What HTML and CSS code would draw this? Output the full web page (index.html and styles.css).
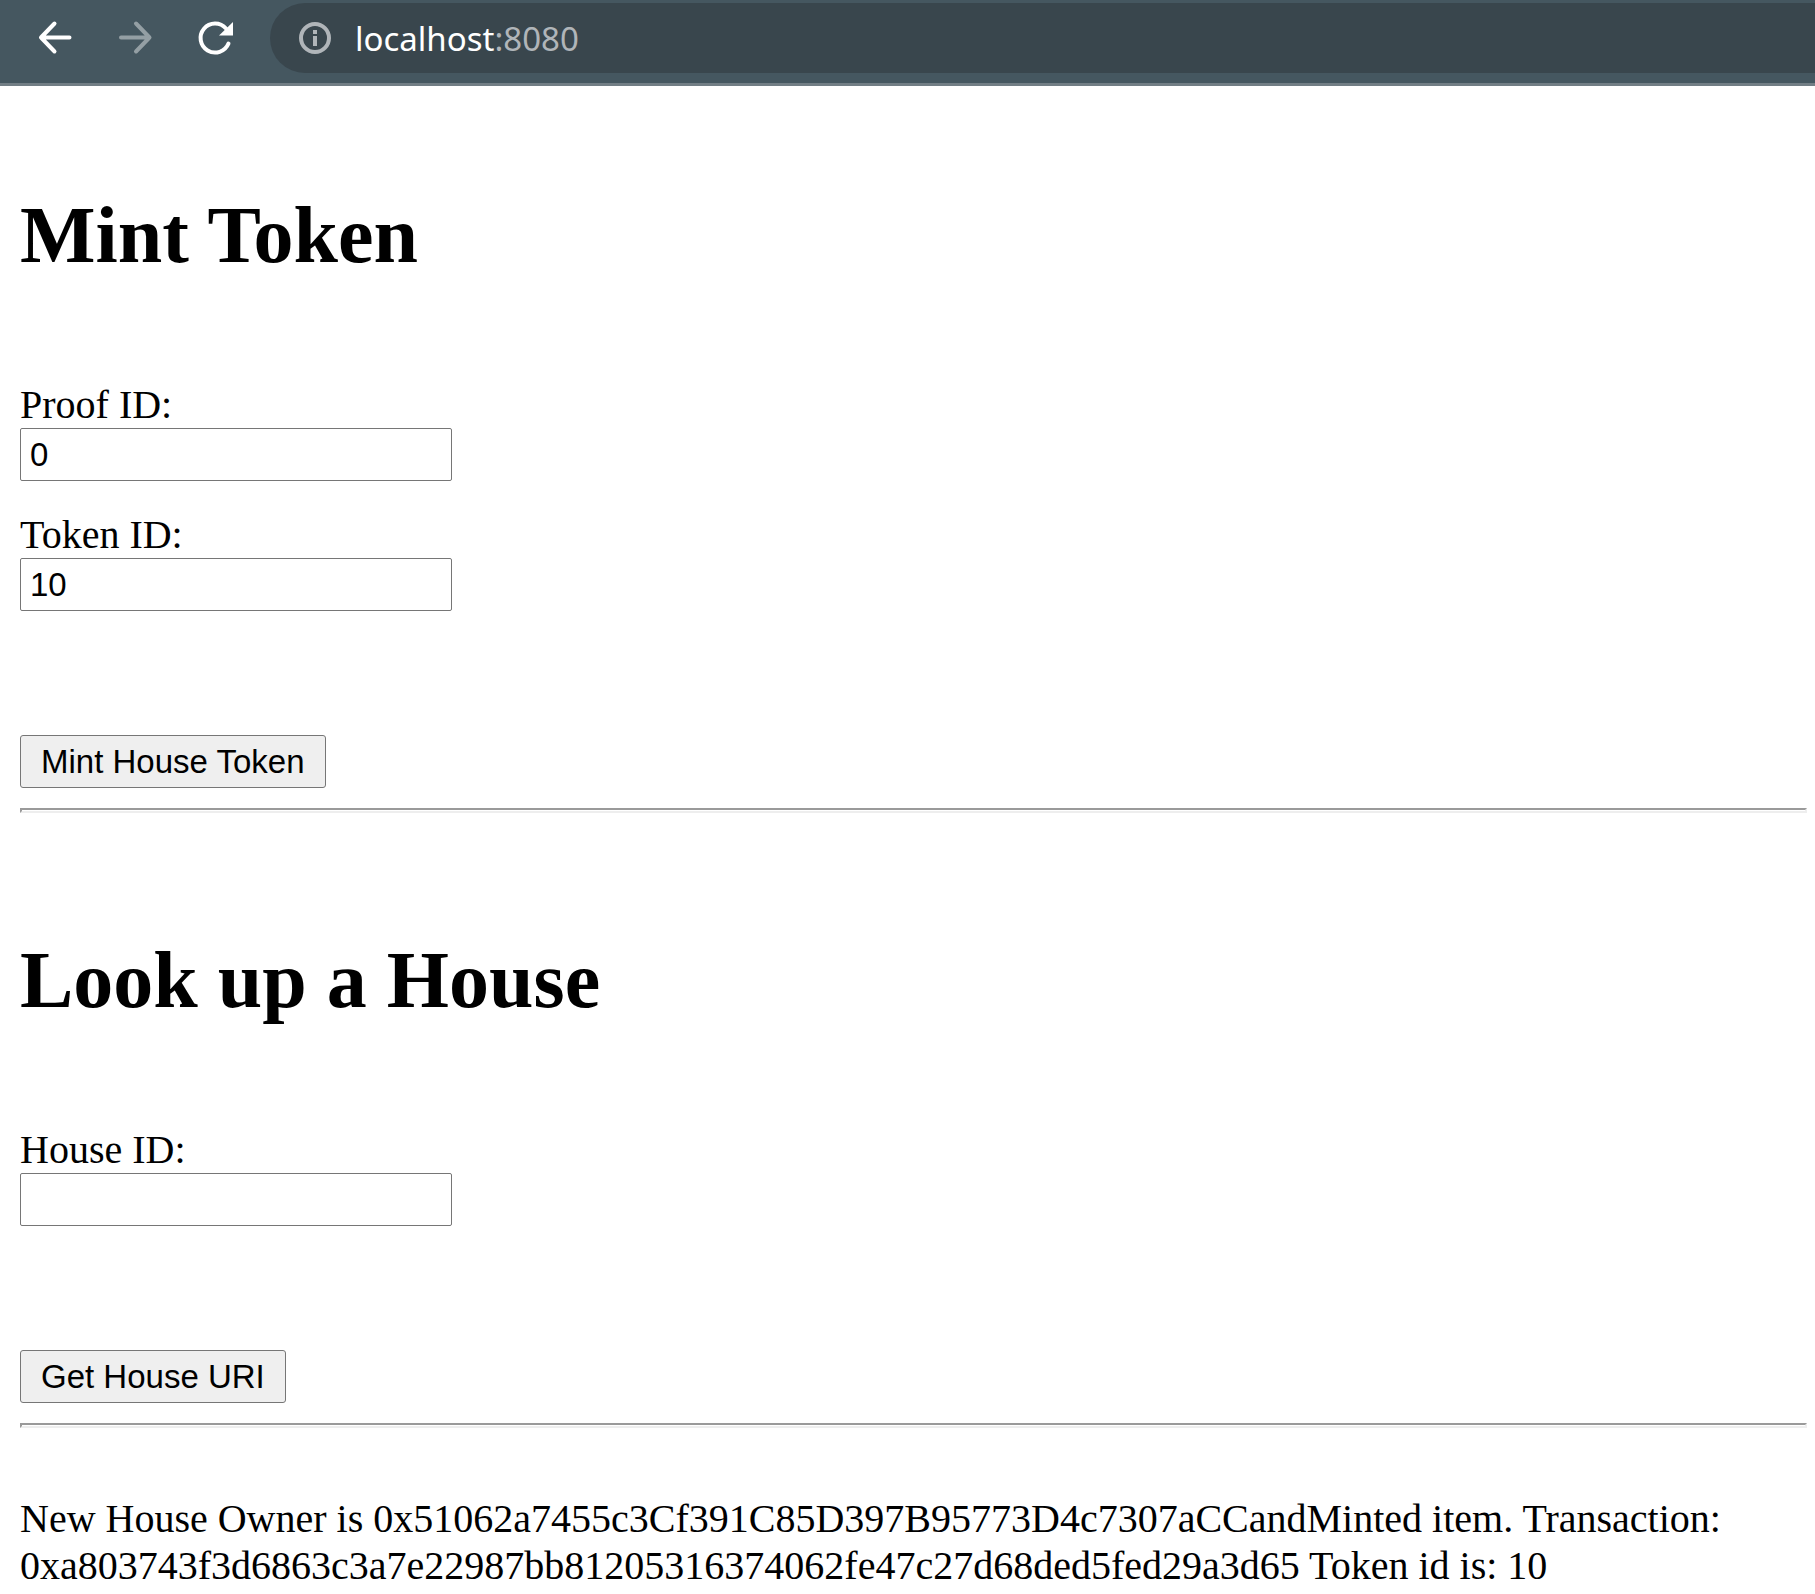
FILE: index.html
```html
<!DOCTYPE html>
<html lang="en">
<head>
<meta charset="utf-8">
<title>localhost:8080</title>
<link rel="stylesheet" href="styles.css">
</head>
<body>
<header class="toolbar">
  <button class="nav-button" type="button" aria-label="Back">
    <svg class="icon" viewBox="0 0 40 40" fill="none" stroke="#fff" stroke-width="4" stroke-linecap="round" stroke-linejoin="round"><path d="M34.500 19.500H6M19.500 5.500L6 19.500l13.500 14"/></svg>
  </button>
  <button class="nav-button" type="button" aria-label="Forward" disabled>
    <svg class="icon" viewBox="0 0 40 40" fill="none" stroke="#949fa4" stroke-width="4" stroke-linecap="round" stroke-linejoin="round"><path d="M6 19.500h28.500M21 5.500l13.500 14L21 33.500"/></svg>
  </button>
  <button class="nav-button" type="button" aria-label="Reload">
    <svg class="icon" viewBox="0 0 40 40"><path d="M33.500 25.500A14.500 14.500 0 1 1 31 10.500" fill="none" stroke="#fff" stroke-width="4" stroke-linecap="round"/><path d="M38 4v13.500H24z" fill="#fff"/></svg>
  </button>
  <div class="address">
    <svg class="info" viewBox="0 0 34 34"><circle cx="17" cy="17" r="14" fill="none" stroke="#b0b5b9" stroke-width="4"/><path d="M15 9h4v4h-4zM15 15h4v10h-4z" fill="#b0b5b9"/></svg>
    <span class="url">localhost<span class="port">:8080</span></span>
  </div>
</header>
<main class="page">
  <form class="section">
    <h1 class="title">Mint Token</h1>
    <div class="fields">
      <div class="field">
        <label for="proof">Proof ID:</label>
        <input class="text-input" type="text" id="proof" value="0">
      </div>
      <div class="field">
        <label for="token">Token ID:</label>
        <input class="text-input" type="text" id="token" value="10">
      </div>
    </div>
    <button class="action" type="button">Mint House Token</button>
  </form>
  <hr class="rule">
  <form class="section section-next">
    <h1 class="title">Look up a House</h1>
    <div class="fields">
      <div class="field">
        <label for="house">House ID:</label>
        <input class="text-input" type="text" id="house">
      </div>
    </div>
    <button class="action" type="button">Get House URI</button>
  </form>
  <hr class="rule">
  <p class="message">New House Owner is 0x51062a7455c3Cf391C85D397B95773D4c7307aCCandMinted item. Transaction: 0xa803743f3d6863c3a7e22987bb81205316374062fe47c27d68ded5fed29a3d65 Token id is: 10</p>
</main>
</body>
</html>
```
FILE: styles.css
```css
* {
  box-sizing: border-box;
}

body {
  margin: 0;
  background: #fff;
  color: #000;
  font: 40px/47px "Liberation Serif", "Times New Roman", serif;
}

.toolbar {
  display: flex;
  align-items: flex-start;
  gap: 40px;
  padding: 3px 0 10px 35px;
  background: #455760;
  border-bottom: 3px solid #727e85;
}

.nav-button {
  display: flex;
  align-items: center;
  height: 70px;
  padding: 0;
  border: 0;
  background: none;
}

.icon {
  width: 40px;
  height: 40px;
}

.address {
  display: flex;
  flex: 1;
  align-items: center;
  gap: 23px;
  height: 70px;
  margin-left: -5px;
  padding-left: 28px;
  border-radius: 35px 0 0 35px;
  background: #39464d;
}

.info {
  width: 34px;
  height: 34px;
}

.url {
  color: #fff;
  font-family: "Noto Sans", "Open Sans", sans-serif;
  font-size: 33px;
}

.port {
  color: #b0b5b9;
}

.page {
  padding: 103px 8px 0 20px;
}

.section {
  display: flex;
  flex-direction: column;
  align-items: flex-start;
}

.section-next {
  padding-top: 121px;
}

.title {
  margin: 0 0 100px;
  font-size: 80px;
  line-height: 92px;
}

.fields {
  display: flex;
  flex-direction: column;
  gap: 30px;
  margin-bottom: 124px;
}

.field {
  display: flex;
  flex-direction: column;
  align-items: flex-start;
}

.text-input {
  width: 432px;
  height: 53px;
  padding: 2px 9px;
  border: 1px solid #767676;
  border-radius: 2px;
  background: #fff;
  color: #000;
  font: 33px "Liberation Sans", Arial, sans-serif;
}

.action {
  height: 53px;
  padding: 0 20px;
  border: 1px solid #767676;
  border-radius: 3px;
  background: #efefef;
  color: #000;
  font: 33px "Liberation Sans", Arial, sans-serif;
}

.rule {
  height: 5px;
  margin: 20px 0 0;
  border: 2px solid;
  border-color: #9a9a9a #eee #eee #9a9a9a;
}

.message {
  margin: 67px 0 0;
}
```
